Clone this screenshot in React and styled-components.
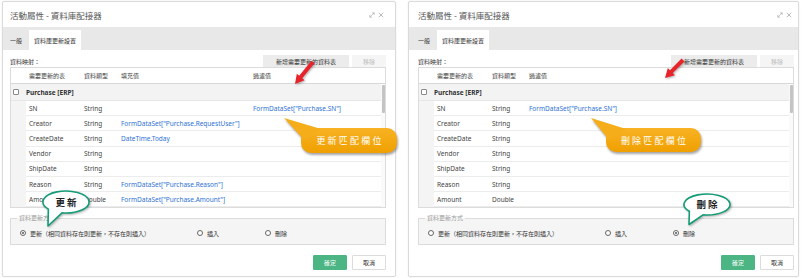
import React from 'react';
import styled, { createGlobalStyle } from 'styled-components';

const GlobalStyle = createGlobalStyle`
  html, body { margin: 0; padding: 0; background: #fff; }
  body { font-family: "Noto Sans", "Noto Sans CJK TC", sans-serif; }
  * { box-sizing: border-box; }
`;

const Page = styled.div`
  display: flex;
  align-items: flex-start;
  gap: 12px;
  padding: 1px 0 0 2px;
  width: 804px;
  height: 278px;
  overflow: hidden;
`;

const Panel = styled.div`
  position: relative;
  flex: none;
  width: ${p => p.$w}px;
  height: 276px;
  border: 1px solid #dadada;
  border-radius: 2px;
  background: #fff;
  box-shadow: 0 0 2px rgba(0, 0, 0, 0.08);
  display: flex;
  flex-direction: column;
  --pl: ${p => p.$pl}px;
  --pr: ${p => p.$pr}px;
`;

const Header = styled.div`
  height: 25px;
  flex: none;
  display: flex;
  align-items: center;
  justify-content: space-between;
  padding: 0 calc(var(--pr) + 2px) 0 var(--pl);
  font-family: "Noto Sans CJK TC", sans-serif;
  font-size: 8.5px;
  color: #555;
`;

const HeaderIcons = styled.div`
  display: flex;
  gap: 3px;
  align-items: center;
  color: #b0b0b0;
`;

const TabBar = styled.div`
  height: 23px;
  flex: none;
  display: flex;
  align-items: flex-end;
  gap: 2px;
  background: #e8e8e8;
  padding-left: calc(var(--pl) - 5px);
`;

const Tab = styled.div`
  height: 20px;
  padding: 0 5px;
  display: flex;
  align-items: center;
  font-family: "Noto Sans CJK TC", sans-serif;
  font-size: 6px;
  color: #333;
  background: ${p => (p.$active ? '#fff' : 'transparent')};
`;

const Body = styled.div`
  flex: 1;
  display: flex;
  flex-direction: column;
  padding: 5px var(--pr) 0 var(--pl);
`;

const Toolbar = styled.div`
  height: 12px;
  display: flex;
  align-items: center;
`;

const Label = styled.div`
  flex: 1;
  font-family: "Noto Sans CJK TC", sans-serif;
  font-size: 6px;
  color: #333;
`;

const ToolButton = styled.div`
  height: 12px;
  width: ${p => p.$w}px;
  margin-left: 3px;
  display: flex;
  align-items: center;
  justify-content: center;
  font-family: "Noto Sans CJK TC", sans-serif;
  font-size: 6px;
  color: ${p => (p.$disabled ? '#bdbdbd' : '#333')};
  background: ${p => (p.$disabled ? '#f5f5f5' : '#ececec')};
`;

const Table = styled.div`
  border: 1px solid #dcdcdc;
  height: 141px;
  display: flex;
  flex-direction: column;
  overflow: hidden;
`;

const HeadRow = styled.div`
  height: 16px;
  flex: none;
  display: grid;
  grid-template-columns: ${p => p.$cols};
  align-items: center;
  border-bottom: 1px solid #d8d8d8;
  font-family: "Noto Sans CJK TC", sans-serif;
  font-size: 6px;
  color: #444;
`;

const Cell = styled.div`
  padding-left: 3px;
  white-space: nowrap;
  overflow: visible;
  color: ${p => (p.$link ? '#2f72d6' : 'inherit')};
`;

const ScrollArea = styled.div`
  flex: 1;
  display: flex;
  min-height: 0;
`;

const Rows = styled.div`
  flex: 1;
  display: flex;
  flex-direction: column;
`;

const Scrollbar = styled.div`
  width: 4px;
  flex: none;
  background: #fafafa;
  padding: 1px 0.5px;
`;

const Thumb = styled.div`
  height: 28px;
  border-radius: 1px;
  background: #c4c4c4;
`;

const GroupRow = styled.div`
  height: 17px;
  flex: none;
  display: flex;
  align-items: center;
  gap: 7px;
  padding-left: 2px;
  background: #f3f3f3;
  border-bottom: 1px solid #e6e6e6;
  font-size: 6.5px;
  font-weight: 700;
  color: #333;
`;

const CheckBox = styled.span`
  width: 6px;
  height: 6px;
  border: 1px solid #8a8a8a;
  border-radius: 1px;
  background: #fff;
`;

const DataRow = styled.div`
  height: 15.2px;
  flex: none;
  display: grid;
  grid-template-columns: ${p => p.$cols};
  align-items: stretch;
  font-size: 6.5px;
  color: #444;
`;

const Indent = styled.div`
  background: #f4f4f4;
`;

const RowCells = styled.div`
  display: grid;
  grid-template-columns: ${p => p.$cols};
  align-items: center;
  border-bottom: 1px solid #ececec;
`;

const Fieldset = styled.fieldset`
  margin: 6px 0 0;
  padding: 0;
  border: 1px solid #dcdcdc;
  background: #f5f5f5;
  min-width: 0;
`;

const Legend = styled.legend`
  margin-left: 6px;
  padding: 0 2px;
  font-family: "Noto Sans CJK TC", sans-serif;
  font-size: 6px;
  line-height: 8px;
  color: #9a9a9a;
`;

const RadioRow = styled.div`
  display: flex;
  align-items: center;
  height: 16px;
  margin: 3px 0 3px;
  padding-left: 9px;
`;

const RadioItem = styled.label`
  display: flex;
  align-items: center;
  gap: 4px;
  width: ${p => (p.$w ? `${p.$w}px` : 'auto')};
  font-family: "Noto Sans CJK TC", sans-serif;
  font-size: 6px;
  color: #333;
`;

const RadioDot = styled.span`
  width: 6px;
  height: 6px;
  border-radius: 50%;
  border: 1px solid #666;
  background: #fff;
  display: flex;
  align-items: center;
  justify-content: center;
  &::after {
    content: '';
    width: 2px;
    height: 2px;
    border-radius: 50%;
    background: ${p => (p.$checked ? '#555' : 'transparent')};
  }
`;

const Footer = styled.div`
  display: flex;
  justify-content: flex-end;
  gap: 5px;
  margin-top: 10px;
`;

const FootButton = styled.div`
  width: 34px;
  height: 15px;
  display: flex;
  align-items: center;
  justify-content: center;
  font-family: "Noto Sans CJK TC", sans-serif;
  font-size: 6px;
  border-radius: 1px;
  color: ${p => (p.$primary ? '#fff' : '#333')};
  background: ${p => (p.$primary ? '#4bb583' : '#fff')};
  border: 1px solid ${p => (p.$primary ? '#4bb583' : '#dcdcdc')};
`;

/* ---------- overlays ---------- */

const ArrowSvg = styled.svg`
  position: absolute;
  left: ${p => p.$x}px;
  top: ${p => p.$y}px;
  overflow: visible;
  filter: drop-shadow(1px 1px 1px rgba(0, 0, 0, 0.3));
  pointer-events: none;
`;

function RedArrow({ from, to }) {
  const [x1, y1] = from;
  const [x2, y2] = to;
  const dx = x2 - x1;
  const dy = y2 - y1;
  const len = Math.hypot(dx, dy);
  const ux = dx / len;
  const uy = dy / len;
  const nx = -uy;
  const ny = ux;
  const head = 9;
  const hw = 5;
  const sw = 2;
  const bx = x2 - ux * head;
  const by = y2 - uy * head;
  const pts = [
    [x1 + nx * sw, y1 + ny * sw],
    [bx + nx * sw, by + ny * sw],
    [bx + nx * hw, by + ny * hw],
    [x2, y2],
    [bx - nx * hw, by - ny * hw],
    [bx - nx * sw, by - ny * sw],
    [x1 - nx * sw, y1 - ny * sw],
  ];
  const ox = Math.min(x1, x2) - 10;
  const oy = Math.min(y1, y2) - 10;
  const w = Math.abs(dx) + 20;
  const h = Math.abs(dy) + 20;
  return (
    <ArrowSvg $x={ox} $y={oy} width={w} height={h}>
      <polygon
        points={pts.map(([a, b]) => `${a - ox},${b - oy}`).join(' ')}
        fill="#e8242b"
      />
    </ArrowSvg>
  );
}

const CalloutBox = styled.div`
  position: absolute;
  left: ${p => p.$x}px;
  top: ${p => p.$y}px;
  width: ${p => p.$w}px;
  height: ${p => p.$h}px;
  display: flex;
  align-items: center;
  justify-content: center;
  isolation: isolate;
  pointer-events: none;
`;

const CalloutShape = styled.svg`
  position: absolute;
  left: 0;
  top: 0;
  overflow: visible;
  z-index: -1;
  filter: drop-shadow(1px 2px 1.2px rgba(0, 0, 0, 0.35));
`;

const CalloutText = styled.span`
  font-family: "Noto Sans CJK TC", sans-serif;
  font-size: 9px;
  letter-spacing: 2.2px;
  padding-left: 2px;
  color: #fff;
`;

function OrangeCallout({ x, y, w, h, tip, text }) {
  const [tx, ty] = tip;
  return (
    <CalloutBox $x={x} $y={y} $w={w} $h={h}>
      <CalloutShape width={w} height={h}>
        <defs>
          <linearGradient id={`og${x}`} x1="0" y1="0" x2="0" y2="1">
            <stop offset="0" stopColor="#f8b224" />
            <stop offset="1" stopColor="#f0a000" />
          </linearGradient>
        </defs>
        <rect x="0" y="0" width={w} height={h} rx="10" fill={`url(#og${x})`} />
        <polygon points={`${tx - x},${ty - y} 20,1 3,12`} fill="#f6ad1a" />
      </CalloutShape>
      <CalloutText>{text}</CalloutText>
    </CalloutBox>
  );
}

const BubbleText = styled.span`
  font-family: "Noto Sans CJK TC", sans-serif;
  font-size: 9.5px;
  font-weight: 700;
  letter-spacing: 2px;
  padding-left: 2px;
  color: #222;
`;

const BubbleShape = styled.svg`
  position: absolute;
  left: 0;
  top: 0;
  overflow: visible;
  z-index: -1;
  filter: drop-shadow(1px 1.5px 1px rgba(0, 0, 0, 0.3));
`;

function GreenBubble({ cx, cy, rx, ry, tip, a1, a2, text }) {
  const x = cx - rx;
  const y = cy - ry;
  const pt = a => {
    const r = (a * Math.PI) / 180;
    return [rx + rx * Math.cos(r), ry + ry * Math.sin(r)];
  };
  const A = pt(a1);
  const B = pt(a2);
  const T = [tip[0] - x, tip[1] - y];
  const d = `M${A[0]},${A[1]} A${rx},${ry} 0 1 0 ${B[0]},${B[1]} L${T[0]},${T[1]} Z`;
  return (
    <CalloutBox $x={x} $y={y} $w={rx * 2} $h={ry * 2}>
      <BubbleShape width={rx * 2} height={ry * 2}>
        <path d={d} fill="#fff" stroke="#159c77" strokeWidth="1.6" strokeLinejoin="round" />
      </BubbleShape>
      <BubbleText>{text}</BubbleText>
    </CalloutBox>
  );
}

/* ---------- data ---------- */

const ROWS = [
  ['SN', 'String', '', 'FormDataSet["Purchase.SN"]'],
  ['Creator', 'String', 'FormDataSet["Purchase.RequestUser"]', ''],
  ['CreateDate', 'String', 'DateTime.Today', ''],
  ['Vendor', 'String', '', ''],
  ['ShipDate', 'String', '', ''],
  ['Reason', 'String', 'FormDataSet["Purchase.Reason"]', ''],
  ['Amount', 'Double', 'FormDataSet["Purchase.Amount"]', ''],
];

function HeaderIconSet() {
  return (
    <HeaderIcons>
      <svg width="6" height="6" viewBox="0 0 6 6">
        <path d="M0.8 5.2 L5.2 0.8 M3 0.8 H5.2 V3 M0.8 3 V5.2 H3" stroke="#b0b0b0" strokeWidth="0.7" fill="none" />
      </svg>
      <svg width="6" height="6" viewBox="0 0 6 6">
        <path d="M0.8 0.8 L5.2 5.2 M5.2 0.8 L0.8 5.2" stroke="#a8a8a8" strokeWidth="0.8" fill="none" />
      </svg>
    </HeaderIcons>
  );
}

function Dialog({ mode, w, pl, pr, children }) {
  const isDelete = mode === 'delete';
  const cols = isDelete ? '15px 55px 37px 1fr' : '15px 55px 37px 132px 1fr';
  const innerCols = isDelete ? '55px 37px 1fr' : '55px 37px 132px 1fr';
  const headers = isDelete
    ? ['', '需要更新的表', '資料類型', '過濾值']
    : ['', '需要更新的表', '資料類型', '填充值', '過濾值'];
  return (
    <Panel $w={w} $pl={pl} $pr={pr}>
      <Header>
        <span>活動屬性 - 資料庫配接器</span>
        <HeaderIconSet />
      </Header>
      <TabBar>
        <Tab>一般</Tab>
        <Tab $active>資料庫更新設置</Tab>
      </TabBar>
      <Body>
        <Toolbar>
          <Label>資料映射：</Label>
          <ToolButton $w={86}>新增需要更新的資料表</ToolButton>
          <ToolButton $w={34} $disabled>移除</ToolButton>
        </Toolbar>
        <Table>
          <HeadRow $cols={cols}>
            {headers.map((h, i) => (
              <Cell key={i}>{h}</Cell>
            ))}
          </HeadRow>
          <ScrollArea>
            <Rows>
              <GroupRow>
                <CheckBox />
                <span>Purchase [ERP]</span>
              </GroupRow>
              {ROWS.map(r => (
                <DataRow key={r[0]} $cols="15px 1fr">
                  <Indent />
                  <RowCells $cols={innerCols}>
                    <Cell>{r[0]}</Cell>
                    <Cell>{r[1]}</Cell>
                    {isDelete ? (
                      <Cell $link>{r[3]}</Cell>
                    ) : (
                      <>
                        <Cell $link>{r[2]}</Cell>
                        <Cell $link>{r[3]}</Cell>
                      </>
                    )}
                  </RowCells>
                </DataRow>
              ))}
            </Rows>
            <Scrollbar>
              <Thumb />
            </Scrollbar>
          </ScrollArea>
        </Table>
        <Fieldset>
          <Legend>資料更新方式</Legend>
          <RadioRow>
            <RadioItem $w={177}>
              <RadioDot $checked={!isDelete} />
              更新（相同資料存在則更新，不存在則插入）
            </RadioItem>
            <RadioItem $w={68}>
              <RadioDot />
              插入
            </RadioItem>
            <RadioItem>
              <RadioDot $checked={isDelete} />
              刪除
            </RadioItem>
          </RadioRow>
        </Fieldset>
        <Footer>
          <FootButton $primary>確定</FootButton>
          <FootButton>取消</FootButton>
        </Footer>
      </Body>
      {children}
    </Panel>
  );
}

export default function App() {
  return (
    <>
      <GlobalStyle />
      <Page>
        <Dialog mode="update" w={394} pl={7} pr={9}>
          <RedArrow from={[310, 60]} to={[292, 82]} />
          <OrangeCallout x={298} y={126} w={96} h={25} tip={[281, 116]} text="更新匹配欄位" />
          <GreenBubble cx={63} cy={200} rx={23} ry={11} tip={[45, 224]} a1={100} a2={140} text="更新" />
        </Dialog>
        <Dialog mode="delete" w={391} pl={9} pr={4}>
          <RedArrow from={[274, 58]} to={[256, 76]} />
          <OrangeCallout x={197} y={126} w={95} h={24} tip={[182, 116]} text="刪除匹配欄位" />
          <GreenBubble cx={298} cy={202} rx={23} ry={10.5} tip={[280, 222]} a1={100} a2={140} text="刪除" />
        </Dialog>
      </Page>
    </>
  );
}
